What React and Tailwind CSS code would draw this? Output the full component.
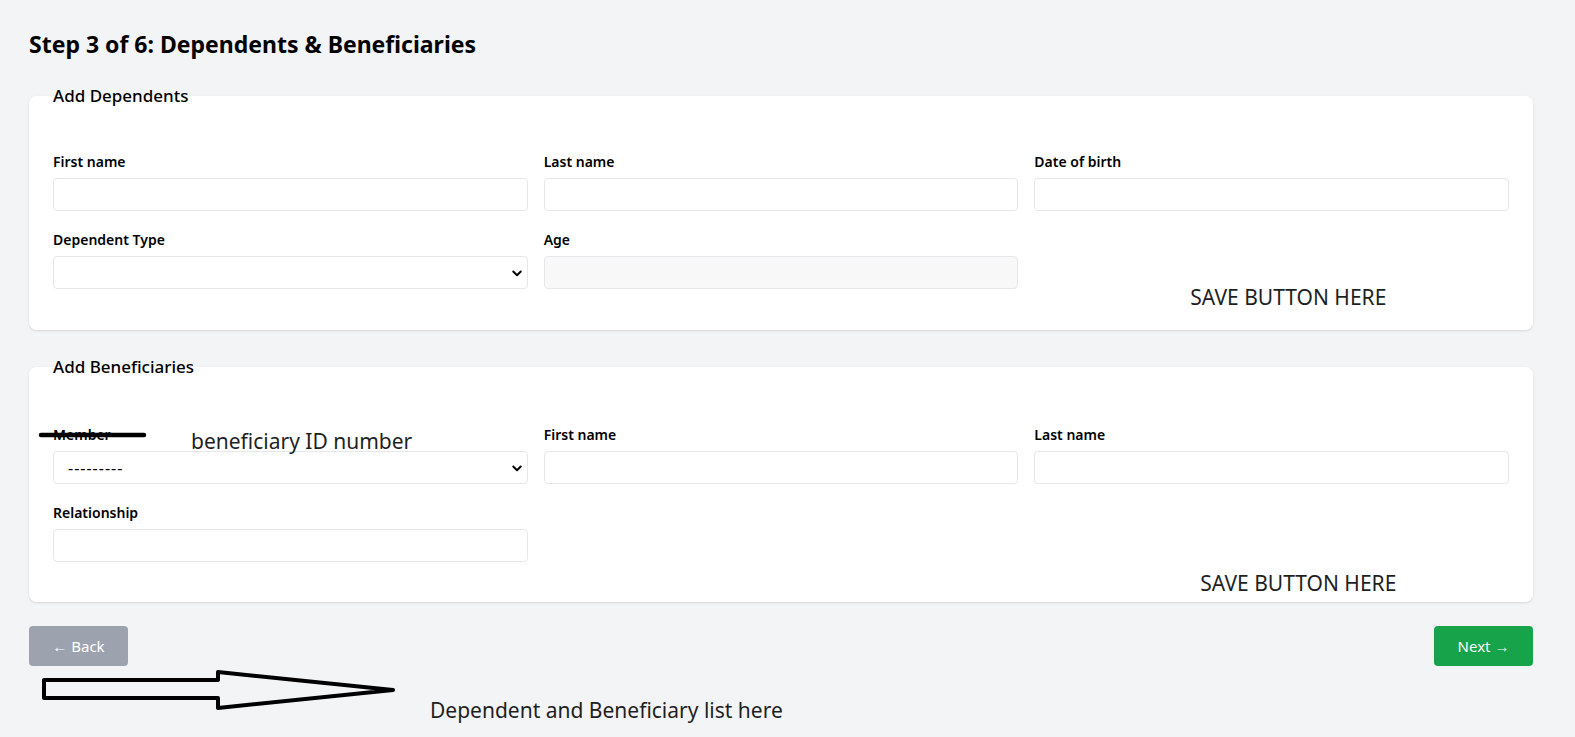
import React from 'react';

const Label = ({ children }) => (
  <label className="mb-1.5 block text-sm font-semibold leading-5 text-black">{children}</label>
);

const TextInput = ({ disabled }) => (
  <input
    type="text"
    disabled={disabled}
    className={`block h-[33px] w-full rounded border border-[#e5e7eb] px-3 text-sm ${disabled ? 'bg-[#f8f8f8]' : 'bg-white'}`}
  />
);

const SelectInput = ({ value }) => (
  <div className="relative">
    <select className="block h-[33px] w-full appearance-none rounded border border-[#e5e7eb] bg-white pl-[14px] pr-8 text-base tracking-[1px] text-black">
      <option>{value}</option>
    </select>
    <svg
      className="pointer-events-none absolute right-[5px] top-1/2 -translate-y-1/2"
      width="12"
      height="12"
      viewBox="0 0 16 16"
    >
      <path d="M3 6l5 5 5-5" fill="none" stroke="black" strokeWidth="2.6" strokeLinecap="round" strokeLinejoin="round" />
    </svg>
  </div>
);

const Field = ({ label, children }) => (
  <div className="mb-[19px]">
    <Label>{label}</Label>
    {children}
  </div>
);

// scribbled notes drawn over the screenshot
const Note = ({ className, children }) => (
  <span className={`pointer-events-none absolute whitespace-nowrap text-[21px] leading-7 text-[#1f1f1f] ${className}`}>
    {children}
  </span>
);

export default function App() {
  return (
    <div className="min-h-screen bg-[#f3f4f6] pl-[29px] pr-[42px] pt-7 font-['Noto_Sans',sans-serif] text-black">
      <h2 className="mb-6 text-[23px] font-bold leading-8">Step 3 of 6: Dependents &amp; Beneficiaries</h2>

      <fieldset className="rounded-lg bg-white px-6 pb-[22px] shadow-sm">
        <legend className="text-[17px] font-medium leading-6">Add Dependents</legend>
        <div className="mt-[44px] grid grid-cols-3 gap-x-4">
          <Field label="First name">
            <TextInput />
          </Field>
          <Field label="Last name">
            <TextInput />
          </Field>
          <Field label="Date of birth">
            <TextInput />
          </Field>
          <Field label="Dependent Type">
            <SelectInput value="" />
          </Field>
          <Field label="Age">
            <TextInput disabled />
          </Field>
          <div className="relative">
            <Note className="left-[156px] top-[53px]">SAVE BUTTON HERE</Note>
          </div>
        </div>
      </fieldset>

      <fieldset className="mt-[25px] rounded-lg bg-white px-6 pb-[21px] shadow-sm">
        <legend className="text-[17px] font-medium leading-6">Add Beneficiaries</legend>
        <div className="mt-[46px] grid grid-cols-3 gap-x-4">
          <div className="relative">
            <Field label="Member">
              <SelectInput value="---------" />
            </Field>
            <svg className="pointer-events-none absolute left-[-15px] top-[6px]" width="110" height="8" viewBox="0 0 110 8">
              <line x1="3" y1="4" x2="106" y2="4" stroke="black" strokeWidth="4.5" strokeLinecap="round" />
            </svg>
            <Note className="left-[138px] top-[2px]">beneficiary ID number</Note>
          </div>
          <Field label="First name">
            <TextInput />
          </Field>
          <Field label="Last name">
            <TextInput />
          </Field>
          <Field label="Relationship">
            <TextInput />
          </Field>
          <div />
          <div className="relative">
            <Note className="left-[166px] top-[66px]">SAVE BUTTON HERE</Note>
          </div>
        </div>
      </fieldset>

      <div className="mt-6 flex justify-between">
        <button className="h-10 w-[99px] rounded bg-[#9ca3af] text-[15px] text-white">← Back</button>
        <button className="h-10 w-[99px] rounded bg-[#16a34a] text-[15px] text-white">Next →</button>
      </div>

      <div className="flex items-start">
        <svg className="ml-[13px] mt-[4px]" width="356" height="42" viewBox="0 0 356 42">
          <path
            d="M2 10 L176 10 L176 2 L351 20 L176 38 L176 28 L2 28 Z"
            fill="none"
            stroke="black"
            strokeWidth="4"
            strokeLinejoin="round"
          />
        </svg>
        <span className="ml-8 mt-[30px] text-[21px] leading-7 text-[#1f1f1f]">Dependent and Beneficiary list here</span>
      </div>
    </div>
  );
}
